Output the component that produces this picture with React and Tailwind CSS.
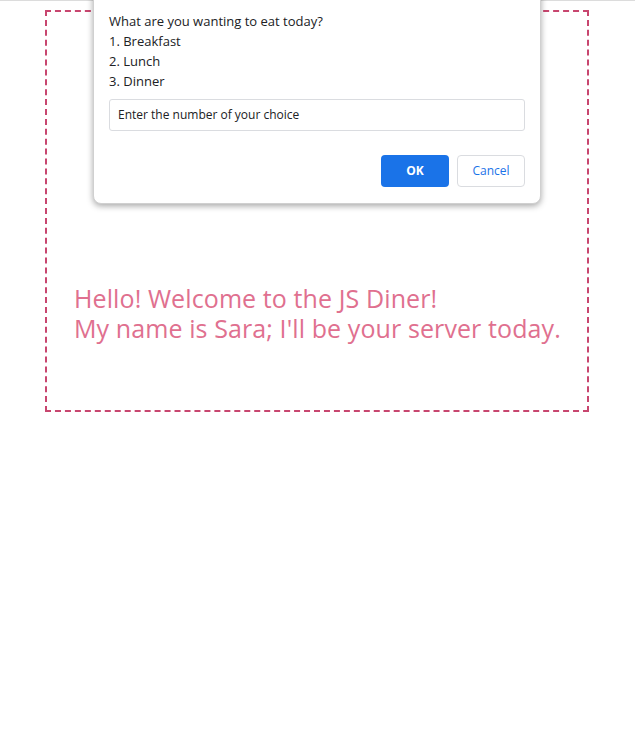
export default function App() {
  return (
    <div className="relative min-h-[740px] bg-white border-t border-[#dcdcdc]">
      {/* Page box */}
      <div className="pt-[9px] pl-[45px]">
        <div className="w-[544px] h-[402px] border-2 border-dashed border-[#c8466f] pl-[27px] pt-[271px]">
          <p className="text-[25px] leading-[30px] text-[#e0708f] font-['Open_Sans',sans-serif] tracking-[0.1px]">
            <span className="block">Hello! Welcome to the JS Diner!</span>
            <span className="block">My name is Sara; I'll be your server today.</span>
          </p>
        </div>
      </div>

      {/* Prompt dialog */}
      <div className="absolute left-[93px] top-[-51px] w-[448px] bg-white rounded-b-[8px] shadow-[0_2px_6px_rgba(0,0,0,0.35)] border border-[#d0d0d0] px-[15px] pt-[33px] pb-[16px] font-['Open_Sans',sans-serif] text-[#202124]">
        <div className="text-[14px] leading-[14px] h-[27px]">127.0.0.1:5500 says</div>
        <div className="text-[13px] leading-[20px]">
          <div>What are you wanting to eat today?</div>
          <div>1. Breakfast</div>
          <div>2. Lunch</div>
          <div>3. Dinner</div>
        </div>
        <div className="mt-[8px] h-[32px] border border-[#dadce0] rounded-[3px] flex items-center px-[8px] text-[12px]">
          Enter the number of your choice
        </div>
        <div className="flex justify-end gap-[8px] mt-[24px]">
          <button className="w-[68px] h-[32px] rounded-[4px] bg-[#1a73e8] text-white text-[12px] font-bold">OK</button>
          <button className="w-[68px] h-[32px] rounded-[4px] border border-[#dadce0] bg-white text-[#1a73e8] text-[12px]">Cancel</button>
        </div>
      </div>
    </div>
  );
}
